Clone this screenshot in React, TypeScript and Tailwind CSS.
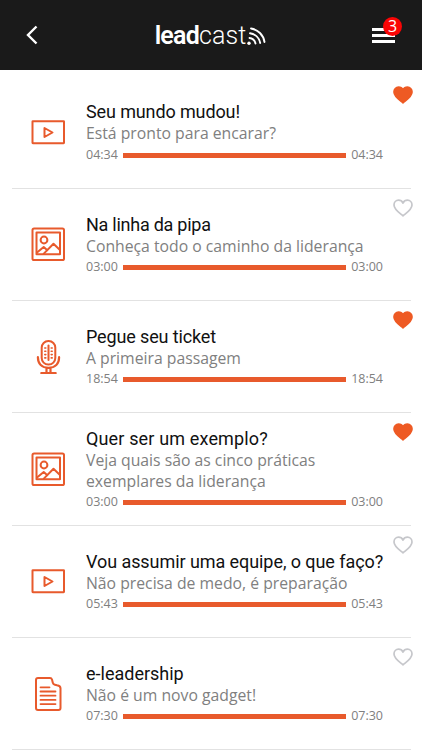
type IconName = 'video' | 'image' | 'mic' | 'doc';

type Episode = {
  icon: IconName;
  title: string;
  titleClass: string;
  subtitle: string;
  time: string;
  liked: boolean;
};

const episodes: Episode[] = [
  { icon: 'video', title: 'Seu mundo mudou!', titleClass: 'tracking-[-0.12px]', subtitle: 'Está pronto para encarar?', time: '04:34', liked: true },
  { icon: 'image', title: 'Na linha da pipa', titleClass: 'tracking-[-0.25px]', subtitle: 'Conheça todo o caminho da liderança', time: '03:00', liked: false },
  { icon: 'mic', title: 'Pegue seu ticket', titleClass: 'tracking-[-0.13px]', subtitle: 'A primeira passagem', time: '18:54', liked: true },
  { icon: 'image', title: 'Quer ser um exemplo?', titleClass: 'tracking-[0.15px]', subtitle: 'Veja quais são as cinco práticas exemplares da liderança', time: '03:00', liked: true },
  { icon: 'video', title: 'Vou assumir uma equipe, o que faço?', titleClass: 'tracking-[-0.07px]', subtitle: 'Não precisa de medo, é preparação', time: '05:43', liked: false },
  { icon: 'doc', title: 'e-leadership', titleClass: 'tracking-normal', subtitle: 'Não é um novo gadget!', time: '07:30', liked: false },
];

function EpisodeIcon({ name }: { name: IconName }) {
  return (
    <svg
      className="w-[34px] h-[34px] shrink-0 text-[#e85a2c]"
      viewBox="0 0 34 34"
      fill="none"
      stroke="currentColor"
      strokeWidth="2"
      strokeLinecap="round"
      strokeLinejoin="round"
    >
      {name === 'video' && (
        <>
          <rect x="1.5" y="6.2" width="31.5" height="22" rx="0.4" />
          <path d="M13.5 13v9l8-4.5z" />
        </>
      )}
      {name === 'image' && (
        <>
          <rect x="1.5" y="1.5" width="31.5" height="31.5" rx="1.6" />
          <rect x="5.5" y="5.5" width="23.5" height="21.8" />
          <circle cx="13" cy="13" r="3.4" />
          <path d="M6 25.5l6.7-5.5 3.6 3.3M12.8 26.6l9.7-9.8 6.2 6" />
        </>
      )}
      {name === 'mic' && (
        <>
          <rect x="10.7" y="1" width="13.6" height="23.6" rx="6.6" />
          <path d="M17.5 5.5v14.500" />
          <path strokeWidth="1.6" d="M13.800 8h1M13.800 11.300h1M13.800 14.600h1M13.800 17.900h1M20.200 8h1M20.200 11.300h1M20.200 14.600h1M20.200 17.900h1" />
          <path strokeWidth="2.2" d="M6.900 17.200c0 6.800 4 10.600 10.600 10.600s10.600-3.800 10.600-10.600M15.500 28.500v4M19.500 28.500v4M10.300 33h14.400" />
        </>
      )}
      {name === 'doc' && (
        <>
          <path d="M7.500 1h11.500q1.500 0 2 1.500l.8 3.200q.4 1.700 2 2l2.200.5q3.500.6 3.500 3V31a2 2 0 0 1-2 2H7a2 2 0 0 1-2-2V3a2 2 0 0 1 2-2z" />
          <path strokeWidth="1.8" d="M9.500 10.300h9M9.500 14.500h15M9.500 18.700h15M9.500 22.900h15M9.500 27.100h15" />
        </>
      )}
    </svg>
  );
}

function Heart({ filled }: { filled: boolean }) {
  return (
    <svg
      className={filled ? 'w-5 h-[18px] fill-[#ee5a24] stroke-[#ee5a24]' : 'w-5 h-[18px] fill-none stroke-[#c6c7cb]'}
      viewBox="0 0 20 18"
      strokeWidth="1.7"
      strokeLinejoin="round"
    >
      <path d="M10 16.8C6 13.5 1 10.3 1 5.9 1 3.1 3 1.2 5.5 1.2c2 0 3.6 1 4.5 2.8.9-1.8 2.5-2.8 4.5-2.8C17 1.2 19 3.1 19 5.9c0 4.400-5 7.600-9 10.900z" />
    </svg>
  );
}

function Logo() {
  return (
    <div className="flex items-center ml-[11px] text-white">
      <div className="flex items-baseline mt-[2px] font-['Roboto',sans-serif] text-[25px] leading-8">
        <span className="font-semibold tracking-[-0.8px]">lead</span>
        <span className="font-light tracking-[0.1px]">cast</span>
      </div>
      <svg className="w-5 h-[18px] mt-[2px]" viewBox="0 0 20 18" fill="none" stroke="currentColor" strokeWidth="1.9" strokeLinecap="round">
        <circle cx="3" cy="16.200" r="1.700" fill="currentColor" stroke="none" />
        <path d="M3.500 11a7 7 0 0 1 6 5.500M4 6.300a12 12 0 0 1 10.200 9.700M5 1.500a16 16 0 0 1 13.500 13.500" />
      </svg>
    </div>
  );
}

function EpisodeRow({ episode }: { episode: Episode }) {
  return (
    <li className="relative flex items-center h-[112.3px] pl-[19px] border-b border-[#e2e2e2]">
      <EpisodeIcon name={episode.icon} />
      <div className="mt-[3px] ml-[21px] w-[297px]">
        <h2 className={`font-['Roboto',sans-serif] text-[18px] leading-[22px] whitespace-nowrap text-[#111] ${episode.titleClass}`}>
          {episode.title}
        </h2>
        <p className="text-[15.75px] leading-[21.3px] text-[#808080]">{episode.subtitle}</p>
        <div className="flex items-center gap-[5px] h-[21px] text-[12.5px] text-[#808080]">
          <span>{episode.time}</span>
          <div className="flex-1 h-[5px] bg-[#e85a2c]" />
          <span>{episode.time}</span>
        </div>
      </div>
      <button className="absolute right-[-2px] top-[10px]" aria-label="Favoritar">
        <Heart filled={episode.liked} />
      </button>
    </li>
  );
}

export default function App() {
  return (
    <div className="h-[750px] overflow-hidden bg-white font-['Open_Sans',sans-serif]">
      {/* Header */}
      <header className="flex items-center justify-between h-[70px] pl-[26px] pr-[27px] bg-[#1a1a1a]">
        <button aria-label="Voltar">
          <svg className="w-3 h-5 text-white" viewBox="0 0 12 20" fill="none" stroke="currentColor" strokeWidth="2.4">
            <path d="M10.5 1.5L2 10l8.500 8.500" />
          </svg>
        </button>
        <Logo />
        <button className="relative flex flex-col gap-[3px] w-[23px]" aria-label="Menu">
          <span className="h-[3px] bg-white" />
          <span className="h-[3px] bg-white" />
          <span className="h-[3px] bg-white" />
          <span className="absolute left-[11px] top-[-11px] flex items-center justify-center size-[19px] rounded-full bg-[#fa0505] text-[16px] text-white">
            3
          </span>
        </button>
      </header>

      {/* Episodes */}
      <ul className="pt-[6.4px] ml-3 mr-[11px]">
        {episodes.map((episode) => (
          <EpisodeRow key={episode.title} episode={episode} />
        ))}
      </ul>
    </div>
  );
}
